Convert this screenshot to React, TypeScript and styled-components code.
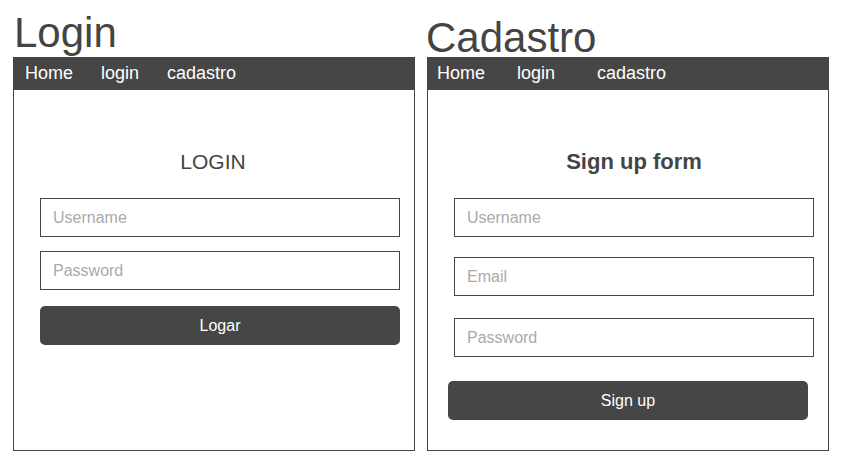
import * as React from "react";
import styled, { createGlobalStyle } from "styled-components";

const GlobalStyle = createGlobalStyle`
  html, body {
    margin: 0;
    padding: 0;
    background: #ffffff;
  }
  body {
    font-family: "Liberation Sans", Arial, sans-serif;
    color: #444444;
  }
`;

const Page = styled.div`
  display: flex;
  align-items: flex-start;
  gap: 12px;
  padding-left: 13px;
`;

const Column = styled.div`
  display: flex;
  flex-direction: column;
  width: 402px;
`;

// tela titulo (Login / Cadastro)
const Title = styled.h1<{ $top: number; $left: number }>`
  box-sizing: border-box;
  height: 57px;
  margin: 0 0 0 ${(p) => p.$left}px;
  padding-top: ${(p) => p.$top}px;
  font-size: 42px;
  font-weight: normal;
  line-height: 47px;
  color: #444444;
  white-space: nowrap;
`;

const Panel = styled.div`
  box-sizing: border-box;
  height: 394px;
  border: 1px solid #444444;
  display: flex;
  flex-direction: column;
`;

const Nav = styled.nav<{ $pad: number }>`
  box-sizing: border-box;
  height: 32px;
  background: #464646;
  display: flex;
  align-items: flex-start;
  padding: 5px 0 0 ${(p) => p.$pad}px;
`;

const NavLink = styled.a<{ $space: number }>`
  color: #ffffff;
  font-size: 18px;
  line-height: 20px;
  text-decoration: none;
  margin-right: ${(p) => p.$space}px;
`;

const Body = styled.div`
  display: flex;
  flex-direction: column;
  padding-left: 26px;
`;

const Heading = styled.h2<{ $bold?: boolean; $shift: number }>`
  margin: 60px 0 0 ${(p) => p.$shift}px;
  width: 360px;
  text-align: center;
  font-size: ${(p) => (p.$bold ? 22 : 21)}px;
  font-weight: ${(p) => (p.$bold ? "bold" : "normal")};
  line-height: 24px;
  color: #444444;
`;

const Input = styled.input<{ $mt: number }>`
  box-sizing: border-box;
  width: 360px;
  height: 39px;
  margin-top: ${(p) => p.$mt}px;
  padding: 1px 12px 0;
  border: 1px solid #444444;
  border-radius: 0;
  outline: none;
  font-family: "Liberation Sans", Arial, sans-serif;
  font-size: 16px;
  color: #444444;
  background: #ffffff;

  &::placeholder {
    color: #aaaaaa;
  }
`;

const Button = styled.button<{ $mt: number; $shift?: number }>`
  box-sizing: border-box;
  width: 360px;
  height: 39px;
  margin-top: ${(p) => p.$mt}px;
  margin-left: ${(p) => p.$shift ?? 0}px;
  padding-top: 1px;
  border: none;
  border-radius: 5px;
  background: #464646;
  color: #ffffff;
  font-family: "Liberation Sans", Arial, sans-serif;
  font-size: 16px;
  cursor: pointer;
`;

export default function App() {
  return (
    <>
      <GlobalStyle />
      <Page>
        <Column>
          <Title $top={9} $left={1}>Login</Title>
          <Panel>
            <Nav $pad={11}>
              <NavLink href="#" $space={28}>Home</NavLink>
              <NavLink href="#" $space={28}>login</NavLink>
              <NavLink href="#" $space={0}>cadastro</NavLink>
            </Nav>
            <Body>
              <Heading $shift={-7}>LOGIN</Heading>
              <Input $mt={24} type="text" placeholder="Username" />
              <Input $mt={14} type="password" placeholder="Password" />
              <Button $mt={16} type="submit">Logar</Button>
            </Body>
          </Panel>
        </Column>
        <Column>
          <Title $top={14} $left={-1}>Cadastro</Title>
          <Panel>
            <Nav $pad={9}>
              <NavLink href="#" $space={32}>Home</NavLink>
              <NavLink href="#" $space={42}>login</NavLink>
              <NavLink href="#" $space={0}>cadastro</NavLink>
            </Nav>
            <Body>
              <Heading $bold $shift={0}>Sign up form</Heading>
              <Input $mt={24} type="text" placeholder="Username" />
              <Input $mt={20} type="email" placeholder="Email" />
              <Input $mt={22} type="password" placeholder="Password" />
              <Button $mt={24} $shift={-6} type="submit">Sign up</Button>
            </Body>
          </Panel>
        </Column>
      </Page>
    </>
  );
}
